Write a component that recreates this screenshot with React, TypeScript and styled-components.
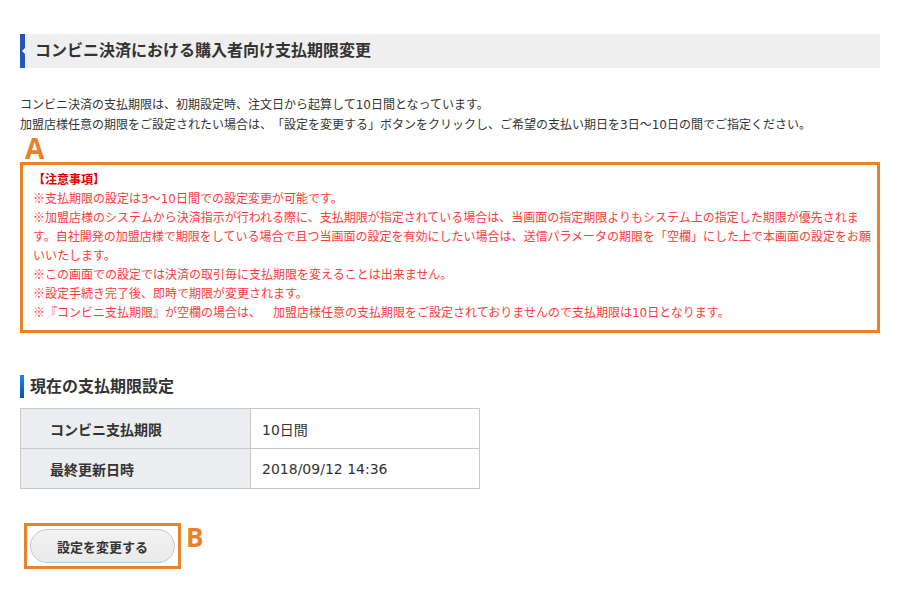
import React from "react";
import styled, { createGlobalStyle } from "styled-components";

const GlobalStyle = createGlobalStyle`
  html, body { margin: 0; padding: 0; background: #fff; }
  body {
    font-family: "DejaVu Sans", "Noto Sans CJK JP", sans-serif;
    color: #333;
    text-spacing-trim: space-all;
  }
`;

const Page = styled.div`
  width: 860px;
  padding: 34px 30px 30px 20px;
`;

const PageHeader = styled.h1`
  position: relative;
  margin: 0;
  height: 34px;
  box-sizing: border-box;
  background: #efefef;
  border-left: 5px solid #2356b5;
  padding-left: 10px;
  font-size: 16px;
  font-weight: 700;
  line-height: 34px;
  color: #333;
  &::before {
    content: "";
    position: absolute;
    left: -3px;
    top: 14px;
    border-style: solid;
    border-width: 3px 3px 3px 0;
    border-color: transparent #fff transparent transparent;
  }
`;

const Intro = styled.p`
  margin: 27px 0 0;
  font-size: 12px;
  line-height: 20px;
  color: #333;
`;

const Marker = styled.div<{ $inline?: boolean }>`
  font-family: "Open Sans", "Liberation Sans", sans-serif;
  font-weight: 700;
  font-size: ${(p) => (p.$inline ? "26px" : "28px")};
  line-height: 22px;
  color: #e9822a;
  margin: ${(p) => (p.$inline ? "3px 0 0 5px" : "2px 0 5px 5px")};
`;

const NoteBox = styled.div`
  margin-top: -2px;
  border: 3px solid #e9822a;
  padding: 6px 2px 7px 10px;
  font-size: 12px;
  line-height: 19px;
  color: #ff3b3b;
`;

const NoteTitle = styled.div`
  font-weight: 700;
  color: #e00000;
`;

const NoteLine = styled.div`
  line-height: 19px;
`;

const RefMark = styled.span`
  font-family: "Noto Sans CJK JP", sans-serif;
  line-height: 1;
`;

const SectionTitle = styled.h2`
  margin: 42px 0 0;
  height: 23px;
  border-left: 4px solid #0a62d8;
  border-image: linear-gradient(to bottom, #1d86f0, #0a4fae) 1;
  padding-left: 6px;
  font-size: 16px;
  font-weight: 700;
  line-height: 23px;
  color: #333;
`;

const Table = styled.table`
  margin-top: 10px;
  width: 460px;
  border-collapse: collapse;
  font-size: 14px;
`;

const Row = styled.tr`
  height: 40px;
`;

const Th = styled.th`
  width: 200px;
  border: 1px solid #c8c8c8;
  background: #ecedf0;
  padding: 0 0 0 29px;
  text-align: left;
  font-weight: 700;
  color: #333;
`;

const Td = styled.td`
  border: 1px solid #c8c8c8;
  padding: 0 0 0 11px;
  color: #333;
`;

const ActionRow = styled.div`
  display: flex;
  align-items: flex-start;
  margin-top: 34px;
`;

const Highlight = styled.div`
  margin-left: 4px;
  border: 3px solid #e9822a;
  padding: 3px;
`;

const Button = styled.button`
  display: block;
  width: 145px;
  height: 34px;
  border: 1px solid #c9c9c9;
  border-radius: 17px;
  background: linear-gradient(#f2f2f2, #eaeaea);
  font-family: "Noto Sans CJK JP", sans-serif;
  font-size: 13px;
  font-weight: 700;
  color: #333;
  cursor: pointer;
`;

const notes = [
  "支払期限の設定は3～10日間での設定変更が可能です。",
  "加盟店様のシステムから決済指示が行われる際に、支払期限が指定されている場合は、当画面の指定期限よりもシステム上の指定した期限が優先されます。自社開発の加盟店様で期限をしている場合で且つ当画面の設定を有効にしたい場合は、送信パラメータの期限を「空欄」にした上で本画面の設定をお願いいたします。",
  "この画面での設定では決済の取引毎に支払期限を変えることは出来ません。",
  "設定手続き完了後、即時で期限が変更されます。",
  "『コンビニ支払期限』が空欄の場合は、　加盟店様任意の支払期限をご設定されておりませんので支払期限は10日となります。",
];

export default function App() {
  return (
    <>
      <GlobalStyle />
      <Page>
        <PageHeader>コンビニ決済における購入者向け支払期限変更</PageHeader>
        <Intro>
          コンビニ決済の支払期限は、初期設定時、注文日から起算して10日間となっています。
          <br />
          加盟店様任意の期限をご設定されたい場合は、「設定を変更する」ボタンをクリックし、ご希望の支払い期日を3日～10日の間でご指定ください。
        </Intro>
        <Marker>A</Marker>
        <NoteBox>
          <NoteTitle>【注意事項】</NoteTitle>
          {notes.map((n) => (
            <NoteLine key={n}>
              <RefMark>※</RefMark>
              {n}
            </NoteLine>
          ))}
        </NoteBox>
        <SectionTitle>現在の支払期限設定</SectionTitle>
        <Table>
          <tbody>
            <Row>
              <Th>コンビニ支払期限</Th>
              <Td>10日間</Td>
            </Row>
            <Row>
              <Th>最終更新日時</Th>
              <Td>2018/09/12 14:36</Td>
            </Row>
          </tbody>
        </Table>
        <ActionRow>
          <Highlight>
            <Button type="button">設定を変更する</Button>
          </Highlight>
          <Marker $inline>B</Marker>
        </ActionRow>
      </Page>
    </>
  );
}
